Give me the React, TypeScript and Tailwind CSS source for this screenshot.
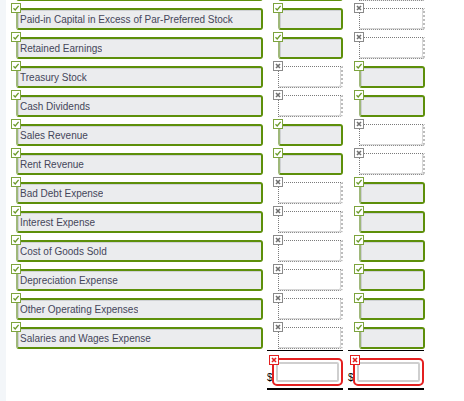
import type { ReactNode } from "react";

type Mark = "ok" | "no";

const rows: { label: string; debit: Mark; credit: Mark }[] = [
  { label: "", debit: "ok", credit: "no" },
  { label: "Paid-in Capital in Excess of Par-Preferred Stock", debit: "ok", credit: "no" },
  { label: "Retained Earnings", debit: "ok", credit: "no" },
  { label: "Treasury Stock", debit: "no", credit: "ok" },
  { label: "Cash Dividends", debit: "no", credit: "ok" },
  { label: "Sales Revenue", debit: "ok", credit: "no" },
  { label: "Rent Revenue", debit: "ok", credit: "no" },
  { label: "Bad Debt Expense", debit: "no", credit: "ok" },
  { label: "Interest Expense", debit: "no", credit: "ok" },
  { label: "Cost of Goods Sold", debit: "no", credit: "ok" },
  { label: "Depreciation Expense", debit: "no", credit: "ok" },
  { label: "Other Operating Expenses", debit: "no", credit: "ok" },
  { label: "Salaries and Wages Expense", debit: "no", credit: "ok" },
];

function Badge({ kind }: { kind: "ok" | "no" | "bad" }) {
  const border =
    kind === "ok" ? "border-[#7da43d]" : kind === "no" ? "border-[#8a8a8a]" : "border-[#e32020]";
  const pos = kind === "bad" ? "-left-[3px] -top-[3px]" : "-left-[5px] -top-[5px]";
  return (
    <span
      className={`absolute ${pos} z-10 flex h-[10px] w-[10px] items-center justify-center border bg-white ${border}`}
    >
      {kind === "ok" ? (
        <svg width="8" height="8" viewBox="0 0 8 8">
          <path d="M1.5 4.3 L3.2 6 L6.6 1.8" fill="none" stroke="#6b9a2a" strokeWidth="1.3" />
        </svg>
      ) : (
        <svg width="8" height="8" viewBox="0 0 8 8">
          <path
            d="M2 2 L6 6 M6 2 L2 6"
            fill="none"
            stroke={kind === "no" ? "#707070" : "#e32020"}
            strokeWidth="1.6"
          />
        </svg>
      )}
    </span>
  );
}

function Cell({ mark, width, children }: { mark: Mark; width: string; children?: ReactNode }) {
  if (mark === "ok") {
    return (
      <div className={`relative h-[22px] shrink-0 ${width}`}>
        <Badge kind="ok" />
        <div className="flex h-full items-center rounded-[3px] border-2 border-[#5d8f0a] border-l-[#9fb87a] bg-[#ebecee] pl-[2px] shadow-[inset_1px_1px_0_#cfd1d4]">
          {children}
        </div>
      </div>
    );
  }
  return (
    <div className={`relative h-[22px] shrink-0 ${width}`}>
      <Badge kind="no" />
      <div className="h-full rounded-br-[3px] border border-dotted border-[#7a7a7a] border-r-2 border-r-[#bdbdbd] bg-white shadow-[inset_-1px_-1px_0_#d6d6d6]" />
    </div>
  );
}

function Total() {
  return (
    <div className="flex w-[76px] flex-col">
      <div className="h-px bg-black" />
      <div className="flex h-[37px] items-end">
        <span className="mb-[5px] w-[5px] text-[10px] leading-none text-black">$</span>
        <div className="relative mb-[2px] h-[28px] flex-1">
          <Badge kind="bad" />
          <div className="h-full rounded-[5px] border-2 border-[#e32020] bg-white p-[2px]">
            <div className="h-full rounded-[2px] border-2 border-[#cfcfcf]" />
          </div>
        </div>
      </div>
      <div className="h-[2px] bg-black" />
    </div>
  );
}

export default function App() {
  return (
    <div
      className="flex h-[401px] w-[464px] overflow-hidden bg-white"
      style={{ fontFamily: '"Liberation Sans", Arial, sans-serif' }}
    >
      <div className="w-[6px] shrink-0 bg-[#f3f6f9]" />
      <div className="-mt-[21px] flex flex-col">
        {rows.map((row, i) => (
          <div key={i} className="flex h-[29px] shrink-0 items-start pl-[10px]">
            <Cell mark="ok" width="w-[247px]">
              <span className="truncate text-[10px] text-[#45465a]">{row.label}</span>
            </Cell>
            <div className="ml-[15px]">
              <Cell mark={row.debit} width="w-[65px]" />
            </div>
            <div className="ml-[16px]">
              <Cell mark={row.credit} width="w-[66px]" />
            </div>
          </div>
        ))}
        <div className="-mt-[6px] flex gap-[5px] pl-[261px]">
          <Total />
          <Total />
        </div>
      </div>
    </div>
  );
}
